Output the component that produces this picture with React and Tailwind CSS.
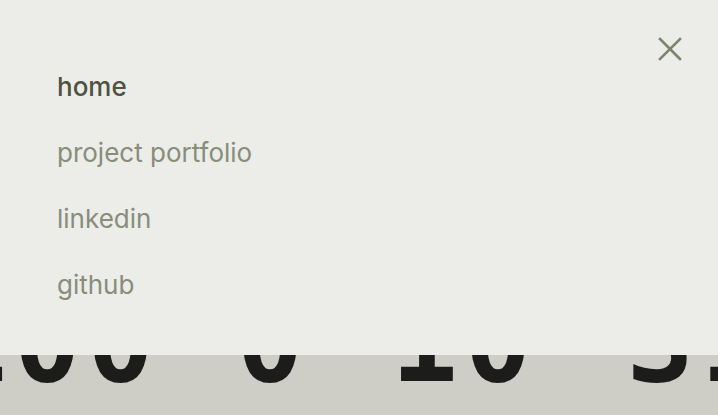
import React from "react";

export default function App() {
  const items = [
    { label: "home", active: true },
    { label: "project portfolio" },
    { label: "linkedin" },
    { label: "github" },
  ];
  return (
    <div className="relative w-[718px] h-[415px] overflow-hidden bg-[#cfcec6]">
      <div
        className="flex whitespace-nowrap mt-[286px] leading-none text-[112px] tracking-[6px] font-bold text-[#1c1c1a] -ml-[60px]"
        style={{ fontFamily: '"DejaVu Sans Mono", monospace' }}
      >
        <span>100</span>
        <span className="ml-[76px]">0</span>
        <span className="ml-[81px]">10</span>
        <span className="ml-[89px]">31</span>
      </div>
      <div className="absolute top-0 left-0 right-0 h-[355px] bg-[#ecece8]">
        <button className="absolute left-[656px] top-[35px] w-[28px] h-[28px] flex items-center justify-center text-[#7b846d]">
          <svg width="26" height="26" viewBox="0 0 26 26" fill="none" stroke="currentColor" strokeWidth="2.6" strokeLinecap="square">
            <path d="M3 3L23 23M23 3L3 23" />
          </svg>
        </button>
        <nav
          className="flex flex-col gap-[34px] pl-[57px] pt-[71px]"
          style={{ fontFamily: 'Inter, "Noto Sans", sans-serif' }}
        >
          {items.map((it) => (
            <a
              key={it.label}
              className={
                "block text-[26px] leading-[32px] " +
                (it.active ? "font-medium text-[#4f5240]" : "font-normal text-[#868e7b]")
              }
            >
              {it.label}
            </a>
          ))}
        </nav>
      </div>
    </div>
  );
}
